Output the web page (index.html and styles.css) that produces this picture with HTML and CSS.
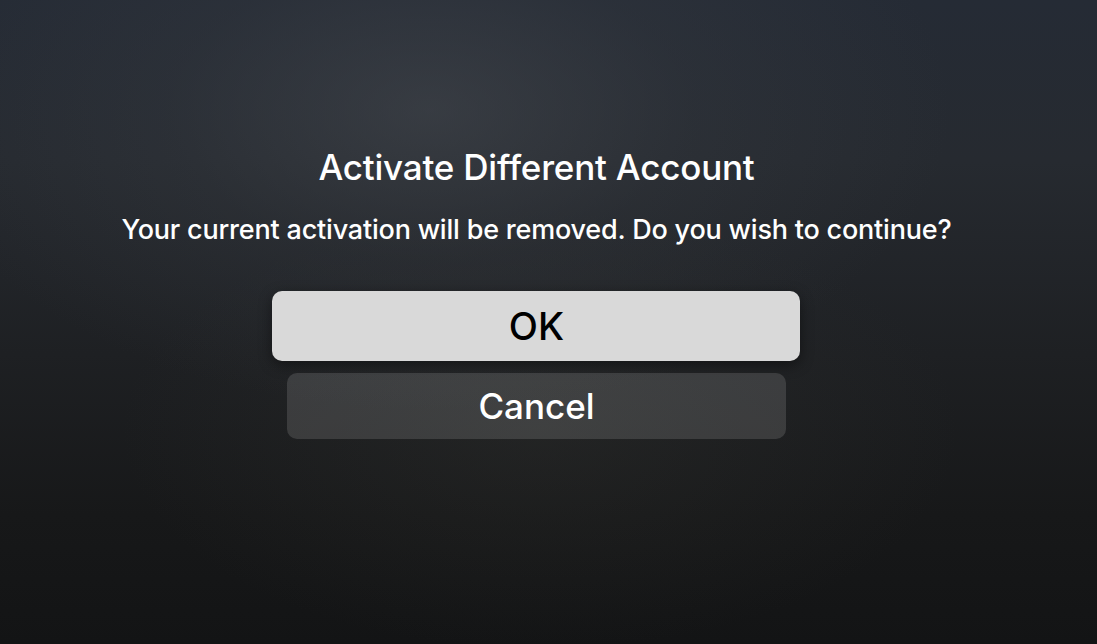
FILE: index.html
```html
<!DOCTYPE html>
<html lang="en">
<head>
<meta charset="utf-8">
<title>Activate Different Account</title>
<link rel="stylesheet" href="styles.css">
</head>
<body>
<main class="screen">
  <section class="alert">
    <h1 class="alert-title">Activate Different Account</h1>
    <p class="alert-message">Your current activation will be removed. Do you wish to continue?</p>
    <div class="alert-actions">
      <button class="btn btn-focused">OK</button>
      <button class="btn btn-normal">Cancel</button>
    </div>
  </section>
</main>
</body>
</html>
```
FILE: styles.css
```css
html, body {
  margin: 0;
  padding: 0;
  height: 100%;
}
body {
  font-family: Inter, "Liberation Sans", sans-serif;
  color: #fff;
  background:
    radial-gradient(ellipse 520px 300px at 430px 110px, rgba(70,74,80,0.55) 0%, rgba(60,64,70,0.25) 50%, rgba(40,44,50,0) 100%),
    radial-gradient(ellipse 420px 220px at 540px 430px, rgba(60,60,55,0.25) 0%, rgba(40,40,38,0) 100%),
    linear-gradient(180deg, #252b35 0%, #262a30 25%, #1e2023 55%, #171819 80%, #131415 100%);
  overflow: hidden;
}
.screen {
  height: 644px;
  display: flex;
  justify-content: center;
  padding-right: 24px;
}
.alert {
  display: flex;
  flex-direction: column;
  align-items: center;
  padding-top: 146px;
}
.alert-title {
  margin: 0;
  font-size: 35px;
  line-height: 42px;
  font-weight: 500;
  letter-spacing: -0.2px;
}
.alert-message {
  margin: 26px 0 0;
  font-size: 27px;
  line-height: 32px;
  font-weight: 500;
  letter-spacing: -0.2px;
}
.alert-actions {
  margin-top: 45px;
  display: flex;
  flex-direction: column;
  align-items: center;
  gap: 12px;
}
.btn {
  border: none;
  font-family: inherit;
  border-radius: 10px;
  padding: 0;
  display: flex;
  align-items: center;
  justify-content: center;
}
.btn-focused {
  width: 528px;
  height: 70px;
  background: #d9d9d9;
  color: #000;
  font-size: 38px;
  font-weight: 500;
  box-shadow: 0 4px 14px rgba(0,0,0,0.45);
}
.btn-normal {
  width: 499px;
  height: 66px;
  background: rgba(255,255,255,0.13);
  color: #fff;
  font-size: 35px;
  font-weight: 500;
}
```
